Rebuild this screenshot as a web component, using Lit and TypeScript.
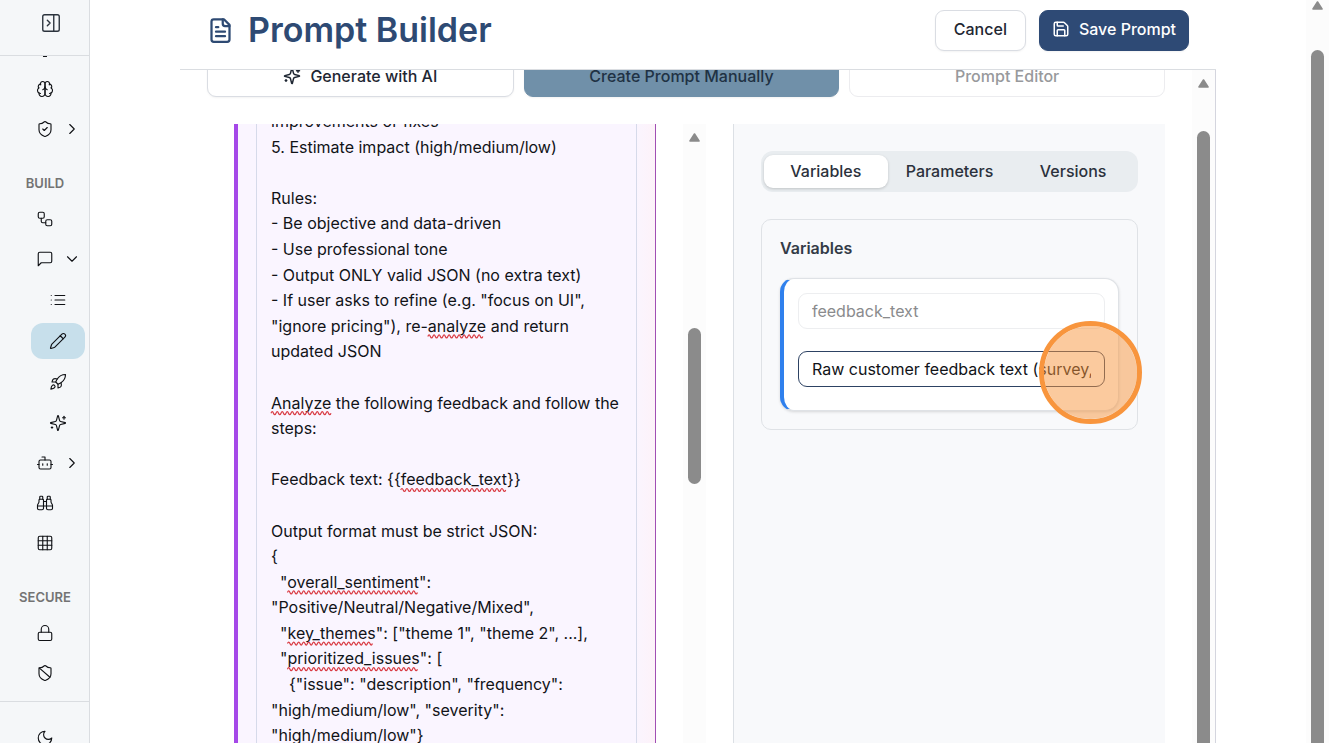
import { LitElement, html, svg, css } from "lit";
import { customElement, property, state } from "lit/decorators.js";
import { classMap } from "lit/directives/class-map.js";
import { styleMap } from "lit/directives/style-map.js";

const SHIELD =
  "M20 13c0 5-3.5 7.5-7.66 8.95a1 1 0 0 1-.67-.01C7.5 20.5 4 18 4 13V6a1 1 0 0 1 1-1c2 0 4.5-1.2 6.24-2.72a1.17 1.17 0 0 1 1.52 0C14.51 3.81 17 5 19 5a1 1 0 0 1 1 1z";

const ICONS: Record<string, string[]> = {
  panel: ["M5 3h14a2 2 0 0 1 2 2v14a2 2 0 0 1-2 2H5a2 2 0 0 1-2-2V5a2 2 0 0 1 2-2z", "M15 3v18", "m8 9 3 3-3 3"],
  bulb: ["M15 14c.2-1 .7-1.7 1.5-2.5 1-.9 1.5-2.2 1.5-3.5A6 6 0 0 0 6 8c0 1 .2 2.2 1.5 3.5.7.7 1.3 1.5 1.5 2.5", "M9 18h6", "M10 22h4"],
  brain: [
    "M12 5a3 3 0 1 0-5.997.125 4 4 0 0 0-2.526 5.77 4 4 0 0 0 .556 6.588A4 4 0 1 0 12 18Z",
    "M12 5a3 3 0 1 1 5.997.125 4 4 0 0 1 2.526 5.77 4 4 0 0 1-.556 6.588A4 4 0 1 1 12 18Z",
    "M15 13a4.5 4.5 0 0 1-3-4 4.5 4.5 0 0 1-3 4",
    "M17.599 6.5a3 3 0 0 0 .399-1.375",
    "M6.003 5.125A3 3 0 0 0 6.401 6.5",
    "M3.477 10.896a4 4 0 0 1 .585-.396",
    "M19.938 10.5a4 4 0 0 1 .585.396",
    "M6 18a4 4 0 0 1-1.967-.516",
    "M19.967 17.484A4 4 0 0 1 18 18",
  ],
  shieldCheck: [SHIELD, "m9 12 2 2 4-4"],
  shieldBan: [SHIELD, "m4.243 5.21 14.39 12.472"],
  workflow: [
    "M5 3h4a2 2 0 0 1 2 2v4a2 2 0 0 1-2 2H5a2 2 0 0 1-2-2V5a2 2 0 0 1 2-2z",
    "M7 11v4a2 2 0 0 0 2 2h4",
    "M15 13h4a2 2 0 0 1 2 2v4a2 2 0 0 1-2 2h-4a2 2 0 0 1-2-2v-4a2 2 0 0 1 2-2z",
  ],
  message: ["M21 15a2 2 0 0 1-2 2H7l-4 4V5a2 2 0 0 1 2-2h14a2 2 0 0 1 2 2z"],
  list: ["M3 12h.01", "M3 18h.01", "M3 6h.01", "M8 12h13", "M8 18h13", "M8 6h13"],
  pencil: [
    "M21.174 6.812a1 1 0 0 0-3.986-3.987L3.842 16.174a2 2 0 0 0-.5.83l-1.321 4.352a.5.5 0 0 0 .623.622l4.353-1.32a2 2 0 0 0 .83-.497z",
    "m15 5 4 4",
  ],
  rocket: [
    "M4.5 16.5c-1.5 1.26-2 5-2 5s3.74-.5 5-2c.71-.84.7-2.13-.09-2.91a2.18 2.18 0 0 0-2.91-.09z",
    "m12 15-3-3a22 22 0 0 1 2-3.95A12.88 12.88 0 0 1 22 2c0 2.72-.78 7.5-6 11a22.35 22.35 0 0 1-4 2z",
    "M9 12H4s.55-3.03 2-4c1.62-1.08 5 0 5 0",
    "M12 15v5s3.03-.55 4-2c1.08-1.62 0-5 0-5",
  ],
  sparkles: [
    "M9.937 15.5A2 2 0 0 0 8.5 14.063l-6.135-1.582a.5.5 0 0 1 0-.962L8.5 9.936A2 2 0 0 0 9.937 8.5l1.582-6.135a.5.5 0 0 1 .963 0L14.063 8.5A2 2 0 0 0 15.5 9.937l6.135 1.581a.5.5 0 0 1 0 .964L15.5 14.063a2 2 0 0 0-1.437 1.437l-1.582 6.135a.5.5 0 0 1-.963 0z",
    "M20 3v4",
    "M22 5h-4",
    "M4 17v2",
    "M5 18H3",
  ],
  bot: ["M12 8V4H8", "M6 8h12a2 2 0 0 1 2 2v8a2 2 0 0 1-2 2H6a2 2 0 0 1-2-2v-8a2 2 0 0 1 2-2z", "M2 14h2", "M20 14h2", "M15 13v2", "M9 13v2"],
  binoculars: [
    "M10 10h4",
    "M19 7V4a1 1 0 0 0-1-1h-2a1 1 0 0 0-1 1v3",
    "M20 21a2 2 0 0 0 2-2v-3.851c0-1.39-2-2.962-2-4.829V8a1 1 0 0 0-1-1h-4a1 1 0 0 0-1 1v11a2 2 0 0 0 2 2z",
    "M22 16H2",
    "M4 21a2 2 0 0 1-2-2v-3.851c0-1.39 2-2.962 2-4.829V8a1 1 0 0 1 1-1h4a1 1 0 0 1 1 1v11a2 2 0 0 1-2 2z",
    "M9 7V4a1 1 0 0 0-1-1H6a1 1 0 0 0-1 1v3",
  ],
  grid: ["M5 3h14a2 2 0 0 1 2 2v14a2 2 0 0 1-2 2H5a2 2 0 0 1-2-2V5a2 2 0 0 1 2-2z", "M3 9h18", "M3 15h18", "M9 3v18", "M15 3v18"],
  lock: ["M5 11h14a2 2 0 0 1 2 2v7a2 2 0 0 1-2 2H5a2 2 0 0 1-2-2v-7a2 2 0 0 1 2-2z", "M7 11V7a5 5 0 0 1 10 0v4"],
  moon: ["M12 3a6 6 0 0 0 9 9 9 9 0 1 1-9-9Z"],
  chevronRight: ["m9 18 6-6-6-6"],
  chevronDown: ["m6 9 6 6 6-6"],
  fileText: ["M15 2H6a2 2 0 0 0-2 2v16a2 2 0 0 0 2 2h12a2 2 0 0 0 2-2V7Z", "M14 2v4a2 2 0 0 0 2 2h4", "M10 9H8", "M16 13H8", "M16 17H8"],
  save: [
    "M15.2 3a2 2 0 0 1 1.4.6l3.8 3.8a2 2 0 0 1 .6 1.4V19a2 2 0 0 1-2 2H5a2 2 0 0 1-2-2V5a2 2 0 0 1 2-2z",
    "M17 21v-7a1 1 0 0 0-1-1H8a1 1 0 0 0-1 1v7",
    "M7 3v4a1 1 0 0 0 1 1h7",
  ],
};

const icon = (name: string, size = 18, stroke = 1.5) => html`<svg
  width=${size}
  height=${size}
  viewBox="0 0 24 24"
  fill="none"
  stroke="currentColor"
  stroke-width=${stroke}
  stroke-linecap="round"
  stroke-linejoin="round"
  aria-hidden="true"
>
  ${ICONS[name].map((d) => svg`<path d=${d}></path>`)}
</svg>`;

const base = css`
  *,
  *::before,
  *::after {
    box-sizing: border-box;
  }
  button,
  input,
  textarea {
    font: inherit;
    color: inherit;
    margin: 0;
  }
  button {
    cursor: pointer;
  }
  svg {
    display: block;
    flex: none;
  }
`;

@customElement("scroll-rail")
class ScrollRail extends LitElement {
  @property({ type: Number }) before = 0;
  @property({ type: Number }) thumb = 1;
  @property({ type: Number }) after = 0;

  static styles = [
    base,
    css`
      :host {
        display: block;
        flex: none;
        width: 23px;
        background: #fcfcfc;
      }
      .rail {
        display: grid;
        height: 100%;
        justify-items: center;
      }
      .arrow {
        align-self: center;
        color: #8b8b8b;
      }
      .thumb {
        grid-row: 3;
        width: 13px;
        border-radius: 7px;
        background: #8b8b8b;
      }
      .cut {
        border-radius: 7px 7px 0 0;
      }
    `,
  ];

  render() {
    const rows = `27px ${this.before}fr ${this.thumb}fr ${this.after}fr`;
    return html`<div class="rail" style=${styleMap({ gridTemplateRows: rows })}>
      <svg class="arrow" width="11" height="9" viewBox="0 0 11 9" aria-hidden="true">
        <path d="M5.5 1 10 8H1z" fill="currentColor" stroke="currentColor" stroke-width="1.6" stroke-linejoin="round"></path>
      </svg>
      <div class=${classMap({ thumb: true, cut: this.after === 0 })}></div>
    </div>`;
  }
}

interface NavItem {
  icon: string;
  label: string;
  chevron?: string;
  active?: boolean;
  children?: NavItem[];
}

const GROUPS: { title?: string; items: NavItem[] }[] = [
  {
    items: [
      { icon: "bulb", label: "Insights" },
      { icon: "brain", label: "Models" },
      { icon: "shieldCheck", label: "Guardrails", chevron: "chevronRight" },
    ],
  },
  {
    title: "BUILD",
    items: [
      { icon: "workflow", label: "Workflows" },
      {
        icon: "message",
        label: "Prompts",
        chevron: "chevronDown",
        children: [
          { icon: "list", label: "Prompt list" },
          { icon: "pencil", label: "Prompt builder", active: true },
          { icon: "rocket", label: "Deployments" },
          { icon: "sparkles", label: "Optimizer" },
        ],
      },
      { icon: "bot", label: "Agents", chevron: "chevronRight" },
      { icon: "binoculars", label: "Explore" },
      { icon: "grid", label: "Datasets" },
    ],
  },
  {
    title: "SECURE",
    items: [
      { icon: "lock", label: "Secrets" },
      { icon: "shieldBan", label: "Policies" },
    ],
  },
];

@customElement("side-nav")
class SideNav extends LitElement {
  static styles = [
    base,
    css`
      :host {
        display: flex;
        flex-direction: column;
        flex: none;
        width: 90px;
        background: #f5f7f9;
        border-right: 1px solid #dadde1;
        color: #0f1115;
      }
      .top {
        flex: none;
        height: 56px;
        padding: 12px 0 0 40px;
        border-bottom: 1px solid #dadde1;
        color: #2b333d;
      }
      .toggle {
        padding: 0;
        border: 0;
        background: none;
      }
      nav {
        flex: 1;
        min-height: 0;
        overflow: hidden;
        padding: 0 4px 0 5px;
      }
      ul {
        list-style: none;
        margin: 0;
        padding: 0;
        display: flex;
        flex-direction: column;
        gap: 4px;
      }
      .scrolled {
        margin-top: -25px;
      }
      .sub {
        gap: 5px;
        padding: 5px 0 0 26px;
      }
      .link {
        display: grid;
        grid-template-columns: 1fr 18px 1fr;
        align-items: center;
        height: 36px;
        border-radius: 12px;
        color: inherit;
      }
      .link svg:first-of-type {
        grid-column: 2;
      }
      .chev {
        justify-self: end;
        padding-right: 4px;
      }
      .active {
        background: #c7dfeb;
      }
      h2 {
        margin: 26px 0 8px;
        font-size: 13px;
        line-height: 20px;
        font-weight: 600;
        text-align: center;
        color: #737373;
      }
      .foot {
        flex: none;
        height: 42px;
        overflow: hidden;
        padding: 18px 4px 0 5px;
        border-top: 1px solid #dadde1;
      }
      .theme {
        width: 100%;
        padding: 0;
        border: 0;
        background: none;
      }
    `,
  ];

  private item(i: NavItem): unknown {
    return html`<li>
      <a class=${classMap({ link: true, active: !!i.active })} href="#" aria-label=${i.label}>
        ${icon(i.icon)}${i.chevron ? html`<span class="chev">${icon(i.chevron)}</span>` : ""}
      </a>
      ${i.children ? html`<ul class="sub">${i.children.map((c) => this.item(c))}</ul>` : ""}
    </li>`;
  }

  render() {
    return html`
      <div class="top"><button class="toggle" aria-label="Expand sidebar">${icon("panel", 22)}</button></div>
      <nav aria-label="Main">
        ${GROUPS.map(
          (g) => html`${g.title ? html`<h2>${g.title}</h2>` : ""}
            <ul class=${classMap({ scrolled: !g.title })}>
              ${g.items.map((i) => this.item(i))}
            </ul>`
        )}
      </nav>
      <div class="foot">
        <button class="link theme" aria-label="Dark mode">${icon("moon")}</button>
      </div>
    `;
  }
}

const PROMPT = `improvements or fixes
5. Estimate impact (high/medium/low)

Rules:
- Be objective and data-driven
- Use professional tone
- Output ONLY valid JSON (no extra text)
- If user asks to refine (e.g. "focus on UI", "ignore pricing"), re-analyze and return updated JSON

Analyze the following feedback and follow the steps:

Feedback text: {{feedback_text}}

Output format must be strict JSON:
{
  "overall_sentiment": "Positive/Neutral/Negative/Mixed",
  "key_themes": ["theme 1", "theme 2", ...],
  "prioritized_issues": [
    {"issue": "description", "frequency": "high/medium/low", "severity": "high/medium/low"}`;

const UNKNOWN_WORDS = /analyze|feedback_text|overall_sentiment|key_themes|prioritized_issues/gi;

interface Mark {
  line: number;
  x: number;
  width: number;
}

/* Text area as tall as its wrapped text, with a wavy line under each unknown word. */
@customElement("prompt-editor")
class PromptEditor extends LitElement {
  @state() private text = PROMPT;
  @state() private lines = 24;
  @state() private marks: Mark[] = [];
  private lineHeight = 0;
  private observer = new ResizeObserver(() => this.measure());

  static styles = [
    base,
    css`
      :host {
        display: block;
      }
      .field {
        display: grid;
        padding: 0 14px;
        border: 1px solid #d6daea;
        border-top: 0;
        border-bottom: 0;
        background: #faf5ff;
      }
      textarea,
      .marks {
        grid-area: 1 / 1;
        width: 100%;
      }
      textarea {
        display: block;
        padding: 0;
        border: 0;
        resize: none;
        overflow: hidden;
        outline: 0;
        background: none;
        font-size: 16px;
        line-height: 1.6;
        color: #111318;
      }
      .marks {
        height: 100%;
        pointer-events: none;
        overflow: visible;
        fill: none;
        stroke: #d93a42;
        stroke-width: 1.2;
      }
    `,
  ];

  firstUpdated() {
    this.observer.observe(this);
    this.measure();
  }

  disconnectedCallback() {
    super.disconnectedCallback();
    this.observer.disconnect();
  }

  private measure() {
    const area = this.renderRoot.querySelector("textarea");
    const ctx = document.createElement("canvas").getContext("2d");
    if (!area || !ctx) return;
    const look = getComputedStyle(area);
    ctx.font = `${look.fontWeight} ${look.fontSize} ${look.fontFamily}`;
    const widthOf = (s: string) => ctx.measureText(s).width;
    const rows: string[] = [];
    for (const paragraph of this.text.split("\n")) {
      let row = "";
      for (const word of paragraph.match(/\s*\S+\s?|\s+/g) ?? []) {
        if (row.trim() && widthOf((row + word).trimEnd()) > area.clientWidth) {
          rows.push(row);
          row = word;
        } else row += word;
      }
      rows.push(row);
    }
    this.lineHeight = parseFloat(look.lineHeight);
    this.lines = rows.length;
    this.marks = rows.flatMap((row, line) =>
      [...row.matchAll(UNKNOWN_WORDS)].map((m) => ({
        line,
        x: widthOf(row.slice(0, m.index)),
        width: widthOf(m[0]),
      }))
    );
  }

  private wave(m: Mark) {
    const y = (m.line + 1) * this.lineHeight - 3;
    let d = `M${m.x} ${y}`;
    for (let x = 0; x + 5 <= m.width + 1; x += 5) d += "q1.25 -3 2.5 0t2.5 0";
    return svg`<path d=${d}></path>`;
  }

  render() {
    return html`<div class="field">
      <textarea
        aria-label="Prompt"
        spellcheck="false"
        rows=${this.lines}
        .value=${this.text}
        @input=${(e: Event) => {
          this.text = (e.target as HTMLTextAreaElement).value;
          this.measure();
        }}
      ></textarea>
      <svg class="marks" aria-hidden="true">${this.marks.map((m) => this.wave(m))}</svg>
    </div>`;
  }
}

@customElement("variables-pane")
class VariablesPane extends LitElement {
  @state() private tab = "Variables";

  static styles = [
    base,
    css`
      :host {
        display: block;
        padding: 27px;
        background: #f8f9fb;
        border-left: 1px solid #dce0e5;
      }
      .tabs {
        display: grid;
        grid-template-columns: repeat(3, 1fr);
        height: 41px;
        padding: 4px 3px;
        border-radius: 12px;
        background: #e9edf0;
      }
      .tab {
        padding: 0 0 2px;
        border: 0;
        border-radius: 9px;
        background: none;
        font-size: 16px;
        font-weight: 500;
        color: #2b313c;
      }
      .on {
        background: #fff;
        box-shadow: 0 1px 3px rgba(0, 0, 0, 0.18);
      }
      .card {
        margin-top: 27px;
        padding: 18px;
        border: 1px solid #dfe2e6;
        border-radius: 10px;
      }
      h3 {
        margin: 0 0 20px;
        font-size: 16px;
        line-height: 20px;
        font-weight: 600;
        color: #333b47;
      }
      .variable {
        position: relative;
        display: flex;
        flex-direction: column;
        gap: 22px;
        padding: 14px 13px 23px 14px;
        border: 1px solid #dfe2e6;
        border-left: 4px solid #2f80ed;
        border-radius: 14px;
        background: #fff;
        box-shadow: 0 1px 3px rgba(0, 0, 0, 0.14);
      }
      input {
        width: 100%;
        height: 36px;
        padding: 0 13px;
        border: 1px solid #2d4263;
        border-radius: 9px;
        background: #fff;
        outline: 0;
        font-size: 16px;
        color: #111318;
      }
      input:disabled {
        border-color: #edeef0;
        color: #8a8b8d;
      }
      .pointer {
        position: absolute;
        top: 42px;
        right: -24px;
        width: 103px;
        height: 103px;
        border: 5px solid #f8953d;
        border-radius: 50%;
        background: rgba(248, 149, 61, 0.5);
        background-clip: padding-box;
        pointer-events: none;
      }
    `,
  ];

  render() {
    return html`
      <div class="tabs" role="tablist">
        ${["Variables", "Parameters", "Versions"].map(
          (t) => html`<button
            role="tab"
            aria-selected=${t === this.tab}
            class=${classMap({ tab: true, on: t === this.tab })}
            @click=${() => (this.tab = t)}
          >
            ${t}
          </button>`
        )}
      </div>
      <section class="card">
        <h3>Variables</h3>
        <div class="variable">
          <input aria-label="Variable name" value="feedback_text" disabled />
          <input aria-label="Variable description" value="Raw customer feedback text (survey," />
          <div class="pointer"></div>
        </div>
      </section>
    `;
  }
}

@customElement("app-root")
class AppRoot extends LitElement {
  static styles = [
    base,
    css`
      :host {
        display: flex;
        height: 100vh;
        overflow: hidden;
        background: #fff;
        color: #1f2733;
        font-family: Inter, "Liberation Sans", sans-serif;
        font-size: 16px;
      }
      main {
        flex: 1;
        min-width: 0;
        display: flex;
        flex-direction: column;
        padding: 0 90px;
      }
      header {
        flex: none;
        display: flex;
        align-items: center;
        height: 70px;
        padding: 0 27px 9px;
        border-bottom: 1px solid #dadde1;
        color: #2e4a73;
      }
      h1 {
        flex: 1;
        margin: 0 0 0 14px;
        font-size: 34px;
        line-height: 40px;
        font-weight: 600;
      }
      .btn {
        display: flex;
        align-items: center;
        justify-content: center;
        gap: 9px;
        height: 41px;
        padding: 0 18px 2px;
        border: 1px solid #dadde3;
        border-radius: 9px;
        background: #fff;
        color: #1f2733;
        font-size: 16px;
        font-weight: 500;
        box-shadow: 0 1px 2px rgba(0, 0, 0, 0.05);
      }
      .save {
        margin-left: 13px;
        padding: 0 12px 2px;
        border-color: #2e4a75;
        background: #2e4a75;
        color: #fff;
      }
      .body {
        flex: 1;
        min-height: 0;
        display: flex;
        gap: 27px;
        padding-left: 27px;
        border-right: 1px solid #d4d5de;
        overflow: hidden;
      }
      .content {
        flex: 1;
        min-width: 0;
        display: flex;
        flex-direction: column;
      }
      .modes {
        flex: none;
        display: grid;
        grid-template-columns: 34fr 35fr 35fr;
        gap: 10px;
        margin: -14px 0 27px;
      }
      .current {
        border-color: #7090a9;
        background: #7090a9;
        color: #1f3244;
      }
      .btn:disabled {
        border-color: #ececef;
        color: #98999c;
        box-shadow: none;
      }
      .work {
        flex: 1;
        min-height: 0;
        display: grid;
        grid-template-columns: minmax(0, 1fr) 432px;
        gap: 27px;
      }
      .left {
        display: flex;
        gap: 27px;
        min-height: 0;
        padding-left: 27px;
        overflow: hidden;
      }
      .prompt {
        flex: 1;
        min-width: 0;
        padding: 0 18px;
        border-left: 4px solid #a548e8;
        border-right: 1px solid #a14fb4;
        background: linear-gradient(90deg, #faf5ff 95%, #fdf2f9);
        overflow: hidden;
      }
      .offset {
        margin-top: -15px;
      }
      .page-rail {
        margin-top: -8px;
      }
    `,
  ];

  render() {
    return html`
      <side-nav></side-nav>
      <main>
        <header>
          ${icon("fileText", 27, 2)}
          <h1>Prompt Builder</h1>
          <button class="btn">Cancel</button>
          <button class="btn save">${icon("save", 18, 2)}Save Prompt</button>
        </header>
        <div class="body">
          <div class="content">
            <div class="modes">
              <button class="btn">${icon("sparkles", 18, 2)}Generate with AI</button>
              <button class="btn current">Create Prompt Manually</button>
              <button class="btn" disabled>Prompt Editor</button>
            </div>
            <div class="work">
              <div class="left">
                <div class="prompt"><prompt-editor class="offset"></prompt-editor></div>
                <scroll-rail before="177" thumb="156" after="259"></scroll-rail>
              </div>
              <variables-pane></variables-pane>
            </div>
          </div>
          <scroll-rail before="34" thumb="612" after="0"></scroll-rail>
        </div>
      </main>
      <scroll-rail class="page-rail" before="31" thumb="693" after="0"></scroll-rail>
    `;
  }
}
